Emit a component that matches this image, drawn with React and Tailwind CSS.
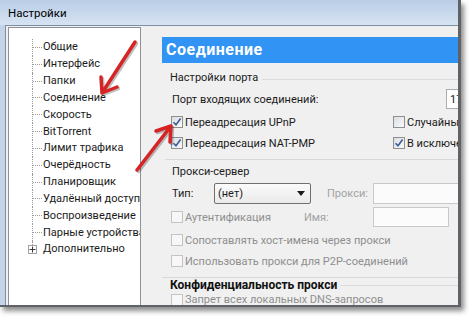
import React from "react";

function Cb({ checked, disabled }) {
  return (
    <span
      className={
        disabled
          ? "w-[12px] h-[12px] shrink-0 border border-[#c4c4c4] bg-[#f7f7f7] flex items-center justify-center"
          : "w-[12px] h-[12px] shrink-0 border border-[#8e8f8f] bg-gradient-to-br from-[#d9dde3] to-[#fafafa] flex items-center justify-center"
      }
    >
      {checked && (
        <svg width="10" height="10" viewBox="0 0 10 10">
          <path d="M1.5 5.2 L4 7.8 L8.6 1.6" fill="none" stroke="#3d5b96" strokeWidth="1.6" />
        </svg>
      )}
    </span>
  );
}

const treeItems = [
  "Общие",
  "Интерфейс",
  "Папки",
  "Соединение",
  "Скорость",
  "BitTorrent",
  "Лимит трафика",
  "Очерёдность",
  "Планировщик",
  "Удалённый доступ",
  "Воспроизведение",
  "Парные устройства",
];

export default function App() {
  return (
    <div className="relative w-[473px] h-[320px] bg-white overflow-hidden font-['Roboto',sans-serif] text-[11px] leading-none text-[#1b1b1b]">
      <div className="w-[461px] h-[307px] flex flex-col bg-[#c3d4e9] border-r-[3px] border-b-2 border-[#5f6266] shadow-[3px_4px_5px_rgba(0,0,0,0.45)]">
        {/* title bar */}
        <div className="h-[25px] shrink-0 pl-[8px] pt-[2px] flex items-center bg-gradient-to-b from-[#b9cde6] via-[#c8d8ec] to-[#d6e3f2] text-[11.5px] text-black">
          Настройки
        </div>
        {/* client */}
        <div className="flex-1 min-h-0 flex ml-[5px] bg-[#f0f0f0] border-l border-t border-[#7f8fa3]">
          {/* tree */}
          <div className="w-[133px] ml-[2px] mt-[1px] shrink-0 bg-white border border-[#8d9199] border-b-0 pt-[11px] overflow-hidden">
            {treeItems.map((t) => (
              <div key={t} className="h-[16.83px] shrink-0 flex items-stretch whitespace-nowrap">
                <div className="w-[23px] shrink-0"></div>
                <div className="w-[10px] shrink-0 border-l border-dotted border-[#9a9a9a] flex items-center">
                  <div className="w-full border-t border-dotted border-[#9a9a9a]"></div>
                </div>
                <span className="self-center pl-[1px] pb-[1px]">{t}</span>
              </div>
            ))}
            <div className="h-[16.83px] shrink-0 flex items-stretch whitespace-nowrap">
              <div className="w-[19px] shrink-0"></div>
              <div className="w-[14px] shrink-0 flex flex-col items-start">
                <div className="h-[4px] ml-[4px] border-l border-dotted border-[#9a9a9a]"></div>
                <div className="w-[9px] h-[9px] border border-[#9ea3a8] bg-white flex items-center justify-center">
                  <svg width="7" height="7" viewBox="0 0 7 7">
                    <path d="M0.5 3.5 H6.5 M3.5 0.5 V6.5" stroke="#3a3a3a" strokeWidth="1" />
                  </svg>
                </div>
              </div>
              <span className="self-center pl-[1px] pb-[1px]">Дополнительно</span>
            </div>
          </div>

          {/* right panel */}
          <div className="flex-1 min-w-0 ml-[21px] mt-[11px] flex flex-col overflow-hidden">
            <div className="h-[26px] shrink-0 bg-[#3193f4] flex items-center pl-[4px] pb-[1px] text-white font-bold text-[16px] tracking-[0.5px]">
              Соединение
            </div>

            {/* Настройки порта */}
            <div className="h-[16px] shrink-0 mt-[6px] flex items-center pl-[8px]">
              <span className="whitespace-nowrap pr-[4px]">Настройки порта</span>
              <div className="flex-1 border-t border-[#dcdcdc] mt-[4px]"></div>
            </div>

            <div className="h-[20px] shrink-0 mt-[4px] flex items-center pl-[10px] whitespace-nowrap">
              <span className="w-[274px] shrink-0">Порт входящих соединений:</span>
              <div className="h-[20px] w-[40px] shrink-0 bg-white border border-[#abadb3] flex items-center pl-[3px]">
                17
              </div>
            </div>

            <div className="h-[16px] shrink-0 mt-[5px] flex items-center pl-[9px] whitespace-nowrap">
              <div className="w-[222px] shrink-0 flex items-center gap-[2px]">
                <Cb checked />
                <span>Переадресация UPnP</span>
              </div>
              <div className="flex items-center gap-[2px]">
                <Cb />
                <span>Случайный порт</span>
              </div>
            </div>

            <div className="h-[16px] shrink-0 mt-[5px] flex items-center pl-[9px] whitespace-nowrap">
              <div className="w-[222px] shrink-0 flex items-center gap-[2px]">
                <Cb checked />
                <span>Переадресация NAT-PMP</span>
              </div>
              <div className="flex items-center gap-[2px]">
                <Cb checked />
                <span>В исключения брандмауэра</span>
              </div>
            </div>

            <div className="h-[1px] mt-[8px] ml-[3px] bg-[#d8d8d8] shrink-0"></div>

            {/* Прокси-сервер */}
            <div className="h-[16px] shrink-0 mt-[3px] flex items-center pl-[10px] whitespace-nowrap">
              Прокси-сервер
            </div>

            <div className="h-[22px] shrink-0 mt-[3px] flex items-center pl-[10px] whitespace-nowrap">
              <span className="w-[42px] shrink-0">Тип:</span>
              <div className="w-[97px] h-[21px] shrink-0 rounded-[2px] border border-[#707070] bg-gradient-to-b from-[#fbfbfb] to-[#eaeaea] flex items-center pl-[3px] pr-[5px]">
                <span className="flex-1">(нет)</span>
                <svg width="8" height="5" viewBox="0 0 8 5">
                  <path d="M0 0 H8 L4 5 Z" fill="#1a1a1a" />
                </svg>
              </div>
              <span className="w-[46px] shrink-0 pl-[16px] box-content text-[#a3a3a3]">Прокси:</span>
              <div className="w-[90px] h-[21px] shrink-0 bg-[#fbfbfb] border border-[#c9c9c9]"></div>
            </div>

            <div className="h-[20px] shrink-0 mt-[3px] flex items-center pl-[9px] whitespace-nowrap">
              <div className="w-[133px] shrink-0 flex items-center gap-[2px] text-[#8e8e8e]">
                <Cb disabled />
                <span>Аутентификация</span>
              </div>
              <span className="w-[69px] shrink-0 text-[#a3a3a3]">Имя:</span>
              <div className="w-[76px] h-[20px] shrink-0 bg-[#fbfbfb] border border-[#c9c9c9]"></div>
            </div>

            <div className="h-[16px] shrink-0 mt-[5px] flex items-center gap-[2px] pl-[9px] whitespace-nowrap text-[#8e8e8e]">
              <Cb disabled />
              <span>Сопоставлять хост-имена через прокси</span>
            </div>

            <div className="h-[16px] shrink-0 mt-[5px] flex items-center gap-[2px] pl-[9px] whitespace-nowrap text-[#8e8e8e]">
              <Cb disabled />
              <span>Использовать прокси для P2P-соединений</span>
            </div>

            <div className="h-[1px] mt-[8px] bg-[#d8d8d8] shrink-0"></div>

            <div className="h-[14px] shrink-0 flex items-center pl-[8px]">
              <span className="whitespace-nowrap pr-[3px] font-bold text-[12px] text-[#111]">Конфиденциальность прокси</span>
              <div className="flex-1 border-t border-[#dcdcdc]"></div>
            </div>

            <div className="h-[15px] shrink-0 flex items-center gap-[2px] pl-[9px] whitespace-nowrap text-[#8e8e8e]">
              <Cb disabled />
              <span>Запрет всех локальных DNS-запросов</span>
            </div>
          </div>
        </div>
      </div>

      {/* red arrows */}
      <svg className="absolute left-0 top-0 pointer-events-none" width="473" height="320" viewBox="0 0 473 320">
        <g fill="none" stroke="rgba(0,0,0,0.25)" strokeWidth="3.5" strokeLinecap="round" strokeLinejoin="round" transform="translate(1.5,1.5)">
          <path d="M135 42 L102 93 M117 87 L102 93 L101 77" />
          <path d="M137 170 L171 126 M156 131 L171 126 L170 142" />
        </g>
        <g fill="none" stroke="#d62424" strokeWidth="3.5" strokeLinecap="round" strokeLinejoin="round">
          <path d="M135 42 L102 93 M117 87 L102 93 L101 77" />
          <path d="M137 170 L171 126 M156 131 L171 126 L170 142" />
        </g>
      </svg>
    </div>
  );
}
